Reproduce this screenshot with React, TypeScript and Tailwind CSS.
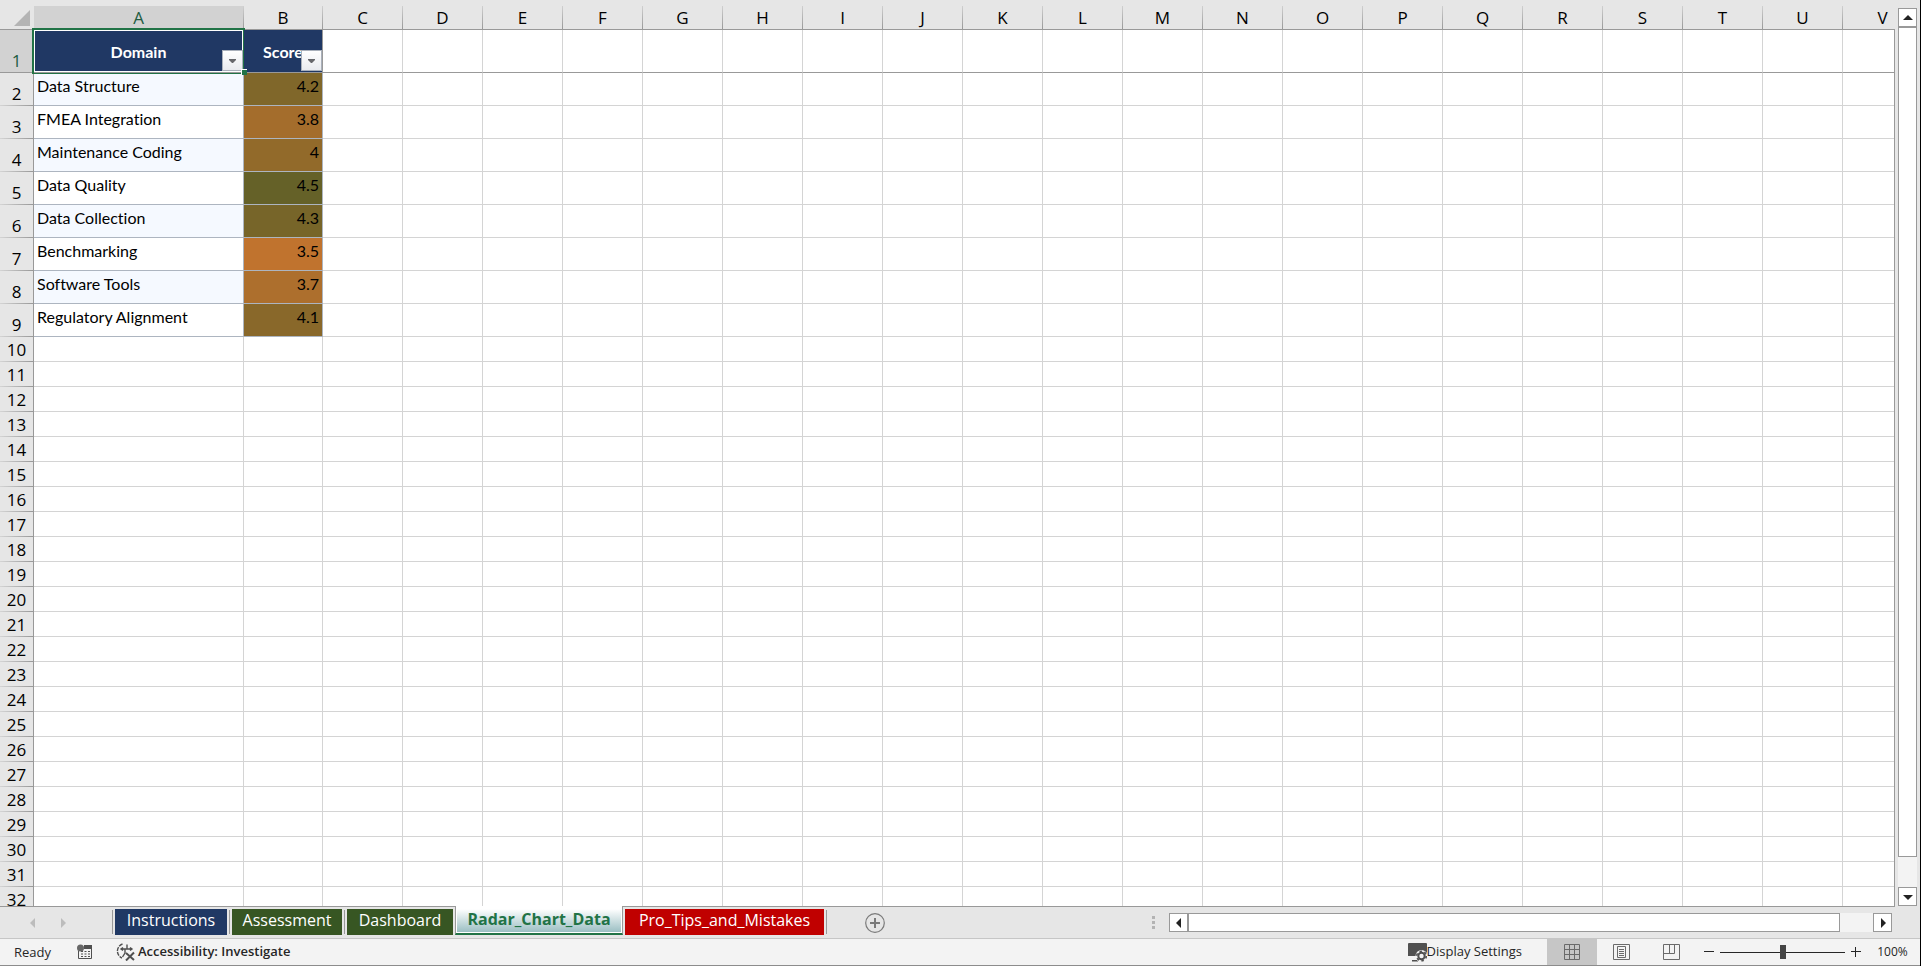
import { type ReactNode } from 'react';

const columns = 'ABCDEFGHIJKLMNOPQRSTUV'.split('');

const scores = [
  { domain: 'Data Structure', score: 4.2, color: 'bg-[#80672a]' },
  { domain: 'FMEA Integration', score: 3.8, color: 'bg-[#a46d2c]' },
  { domain: 'Maintenance Coding', score: 4, color: 'bg-[#926a2a]' },
  { domain: 'Data Quality', score: 4.5, color: 'bg-[#656128]' },
  { domain: 'Data Collection', score: 4.3, color: 'bg-[#776529]' },
  { domain: 'Benchmarking', score: 3.5, color: 'bg-[#c0732e]' },
  { domain: 'Software Tools', score: 3.7, color: 'bg-[#ad6f2d]' },
  { domain: 'Regulatory Alignment', score: 4.1, color: 'bg-[#89682a]' },
];

const emptyRows = Array.from({ length: 23 }, (_, i) => i + 10);

function FilterButton({ label }: { label: string }) {
  return (
    <button
      type="button"
      aria-label={label}
      className="absolute right-0 bottom-px flex h-[21px] w-[21px] items-center justify-center border border-[#a9b0bb] bg-linear-to-b from-white to-[#e9ebef]"
    >
      <svg width="7" height="4" viewBox="0 0 7 4" fill="#66676b">
        <path d="M0 0h7v1L4 4H3L0 1z" />
      </svg>
    </button>
  );
}

function RowHeader({ row }: { row: number }) {
  return (
    <th
      scope="row"
      className="border-r border-[#999] bg-[#e6e6e6] p-0 text-center align-bottom text-[17px] leading-5 font-normal"
    >
      <div className="pt-[3px] pb-px">{row}</div>
      <div className="h-px bg-linear-to-r from-[#d4d4d4] to-[#999]" />
    </th>
  );
}

function BlankCells({ count, className }: { count: number; className: string }) {
  return Array.from({ length: count }, (_, i) => (
    <td key={i} className={`border-r border-b p-0 ${className}`} />
  ));
}

function Grid() {
  return (
    <table className="w-0 table-fixed border-separate border-spacing-0 bg-white font-['Open_Sans',sans-serif] text-black [font-variant-ligatures:none]">
      <colgroup>
        <col className="w-[34px]" />
        <col className="w-[210px]" />
        <col className="w-[79px]" />
        {columns.slice(2).map((c) => (
          <col key={c} className="w-20" />
        ))}
      </colgroup>
      <thead>
        <tr className="h-[30px] bg-[#e6e6e6]">
          <td className="border-b border-[#999] p-0">
            <button type="button" aria-label="Select all" className="mt-1.5 ml-3.5 block h-4 w-4">
              <svg width="16" height="16" viewBox="0 0 16 16" fill="#b4b4b4">
                <path d="M16 0v16H0z" />
              </svg>
            </button>
          </td>
          {columns.map((c) => (
            <th
              key={c}
              scope="col"
              className="border-b border-[#999] p-0 align-bottom text-[17px] font-normal"
            >
              <div
                className={
                  c === 'A'
                    ? 'flex h-[23px] bg-[#d2d2d2] text-[#215c41]'
                    : 'flex h-[23px]'
                }
              >
                <span className="flex-1 text-center leading-6">{c}</span>
                <span className="w-px bg-linear-to-b from-[#d0d0d0] to-[#999]" />
              </div>
            </th>
          ))}
        </tr>
      </thead>
      <tbody>
        <tr className="h-[43px]">
          <th
            scope="row"
            className="border-r border-b border-[#999] bg-[#d2d2d2] p-0 pb-px text-center align-bottom text-[17px] leading-5 font-normal text-[#215c41]"
          >
            1
          </th>
          <td className="relative border-r border-b border-[#999] bg-[#203864] p-0 pt-0.5 text-center font-[Lato,sans-serif] text-base font-bold text-white">
            Domain
            <span className="absolute inset-0 border border-white" />
            <FilterButton label="Filter Domain" />
            <span className="absolute -inset-0.5 border-2 border-b border-[#217346]" />
            <span className="absolute -right-1 -bottom-[3px] z-10 h-[6px] w-[6px] border-t border-l border-white bg-[#217346]" />
          </td>
          <td className="relative border-r border-b border-[#999] bg-[#203864] p-0 pt-0.5 text-center font-[Lato,sans-serif] text-base font-bold text-white">
            Score
            <FilterButton label="Filter Score" />
          </td>
          <BlankCells count={20} className="border-r-[#d4d4d4] border-b-[#999]" />
        </tr>
        {scores.map((s, i) => (
          <tr key={s.domain} className="h-[33px]">
            <RowHeader row={i + 2} />
            <td
              className={`border-r border-b border-[#adb5c0] p-0 pt-px pl-[3px] align-top font-[Lato,sans-serif] text-base ${
                i % 2 === 0 ? 'bg-[#f5f9ff]' : 'bg-white'
              }`}
            >
              {s.domain}
            </td>
            <td
              className={`border-r border-b border-[#adb5c0] p-0 pt-px pr-[3px] text-right align-top font-[Lato,sans-serif] text-base ${s.color}`}
            >
              {s.score}
            </td>
            <BlankCells count={20} className="border-[#d4d4d4]" />
          </tr>
        ))}
        {emptyRows.map((row) => (
          <tr key={row} className="h-[25px]">
            <RowHeader row={row} />
            <BlankCells count={22} className="border-[#d4d4d4]" />
          </tr>
        ))}
      </tbody>
    </table>
  );
}

function ScrollButton({ label, path }: { label: string; path: string }) {
  return (
    <button
      type="button"
      aria-label={label}
      className="flex h-[19px] w-[19px] shrink-0 items-center justify-center border border-[#999] bg-white"
    >
      <svg width="10" height="10" viewBox="0 0 10 10" fill="#222">
        <path d={path} />
      </svg>
    </button>
  );
}

function SheetTab({ name, color }: { name: string; color: string }) {
  return (
    <button type="button" className={`mt-0.5 h-[26px] pb-1 leading-[22px] text-white ${color}`}>
      {name}
    </button>
  );
}

function Separator() {
  return <span className="mx-0.5 mt-[3px] h-6 w-px bg-[#999]" />;
}

function SheetBar() {
  return (
    <div className="flex h-8 shrink-0 border-b border-[#c6c6c6] bg-[#e6e6e6] font-['Open_Sans',sans-serif] text-base">
      <div className="flex flex-1 items-start">
        <div className="flex h-8 w-[110px] items-center gap-[26px] pl-[30px]">
          <button type="button" aria-label="Previous sheet">
            <svg width="5" height="10" viewBox="0 0 5 10" fill="#bcbcbc">
              <path d="M5 0v10L0 5z" />
            </svg>
          </button>
          <button type="button" aria-label="Next sheet">
            <svg width="5" height="10" viewBox="0 0 5 10" fill="#bcbcbc">
              <path d="M0 0v10l5-5z" />
            </svg>
          </button>
        </div>
        <Separator />
        <SheetTab name="Instructions" color="w-[112px] bg-[#203864]" />
        <Separator />
        <SheetTab name="Assessment" color="w-[110px] bg-[#375623]" />
        <Separator />
        <SheetTab name="Dashboard" color="w-[106px] bg-[#375623]" />
        <button
          type="button"
          className="-mt-px ml-0.5 h-[29px] w-[168px] border-x border-b-2 border-x-[#999] border-b-[#217346] bg-white p-px pt-[3px] font-bold text-[#217346]"
        >
          <span className="block h-[23px] bg-linear-to-b from-white to-[#9bbfc3] leading-5">
            Radar_Chart_Data
          </span>
        </button>
        <span className="w-0.5" />
        <SheetTab name="Pro_Tips_and_Mistakes" color="w-[199px] bg-[#c00000]" />
        <Separator />
        <button type="button" aria-label="New sheet" className="mt-1.5 ml-9">
          <svg width="20" height="20" viewBox="0 0 20 20" fill="none" stroke="#7a7a7a">
            <circle cx="10" cy="10" r="9.3" strokeWidth="1.2" />
            <path d="M5 10h10M10 5v10" strokeWidth="2" />
          </svg>
        </button>
      </div>
      <div className="flex w-2/5 items-start pt-1.5 pr-7">
        <div className="mt-[3px] mr-3.5 flex w-[3px] flex-col gap-0.5">
          <span className="h-[3px] bg-[#b3b3b3]" />
          <span className="h-[3px] bg-[#b3b3b3]" />
          <span className="h-[3px] bg-[#b3b3b3]" />
        </div>
        <ScrollButton label="Scroll left" path="M7 0v10L2 5z" />
        <span className="h-[19px] flex-1 border border-[#999] bg-white" />
        <span className="h-[19px] w-[33px] bg-[#f3f3f3]" />
        <ScrollButton label="Scroll right" path="M3 0v10l5-5z" />
      </div>
    </div>
  );
}

function ViewButton({ label, active, children }: { label: string; active?: boolean; children: ReactNode }) {
  return (
    <button
      type="button"
      aria-label={label}
      className={`flex w-[50px] items-center justify-center ${active ? 'bg-[#c6c6c6]' : ''}`}
    >
      <svg width="18" height="16" viewBox="0 0 18 16" fill="none" stroke="#6a6a6a">
        {children}
      </svg>
    </button>
  );
}

function StatusBar() {
  return (
    <div className="flex h-[27px] shrink-0 items-stretch border-b border-[#8c8c8c] bg-[#f3f3f3] font-['Open_Sans',sans-serif] text-[13px] text-[#262626]">
      <span className="w-[77px] pl-3.5 leading-[26px]">Ready</span>
      <button type="button" aria-label="Record macro" className="mr-6">
        <svg width="15" height="16" viewBox="0 0 15 16" fill="none">
          <path d="M7 1h8v4H7z" fill="#505050" />
          <path d="M1.5 7v7.500h13V5" stroke="#505050" />
          <path
            d="M4 7.500h2M7.500 7.500h2M11 7.500h2M4 10h2M7.500 10h2M11 10h2M4 12.500h2M7.500 12.500h2M11 12.500h2"
            stroke="#505050"
          />
          <circle cx="3.5" cy="4" r="3.5" fill="#666" />
        </svg>
      </button>
      <button type="button" className="flex items-center gap-[3px] font-semibold">
        <svg width="19" height="18" viewBox="0 0 19 18" fill="none" stroke="#505050" strokeWidth="1.4">
          <path d="M6.500 1A7.500 7.500 0 0 0 6 15" strokeDasharray="4 1" />
          <path d="M11 1.500v4M5 6h11M7 4.500L5 6l2 1.500M14 4.500L16 6l-2 1.500" />
          <path d="M9 6v4l-2.500 4" />
          <path d="M10 10l8 7M18 9.500L10 17.500" strokeWidth="2" />
        </svg>
        Accessibility: Investigate
      </button>
      <button type="button" className="mr-[25px] ml-auto flex items-center">
        <svg width="19" height="19" viewBox="0 0 19 19">
          <path d="M1 0h17q1 0 1 1v12H0V1q0-1 1-1z" fill="#505050" />
          <path d="M4 17h6v1.500H4z" fill="#505050" />
          <circle cx="13.5" cy="13" r="6" fill="#f3f3f3" />
          <circle cx="13.5" cy="13" r="3.2" fill="none" stroke="#505050" strokeWidth="2" />
          <circle
            cx="13.5"
            cy="13"
            r="4.8"
            fill="none"
            stroke="#505050"
            strokeWidth="1.6"
            strokeDasharray="2.5 2.5"
          />
        </svg>
        Display Settings
      </button>
      <ViewButton label="Normal view" active>
        <path d="M1.500.5h15v15h-15zM1.500 5.500h15M1.500 10.500h15M6.500.5v15M11.500.5v15" />
      </ViewButton>
      <ViewButton label="Page layout">
        <path d="M.5.5h16v15H.5zM4.500 2.500h8v11h-8zM6 5.500h5M6 7.500h5M6 9.500h5M6 11.500h5" />
      </ViewButton>
      <ViewButton label="Page break preview">
        <path d="M.5.5h16v15H.5zM.5 9.500h11v-9M6.500.5v9" />
      </ViewButton>
      <div className="flex items-center gap-1.5 pl-[7px]">
        <button type="button" aria-label="Zoom out">
          <svg width="10" height="11" viewBox="0 0 10 11" stroke="#262626">
            <path d="M0 4.500h10" />
          </svg>
        </button>
        <input
          type="range"
          aria-label="Zoom"
          min={10}
          max={190}
          defaultValue={100}
          className="h-4 w-[125px] appearance-none bg-transparent [&::-webkit-slider-runnable-track]:h-px [&::-webkit-slider-runnable-track]:bg-[#262626] [&::-webkit-slider-thumb]:-mt-[7px] [&::-webkit-slider-thumb]:h-3.5 [&::-webkit-slider-thumb]:w-1.5 [&::-webkit-slider-thumb]:appearance-none [&::-webkit-slider-thumb]:bg-[#444]"
        />
        <button type="button" aria-label="Zoom in">
          <svg width="10" height="11" viewBox="0 0 10 11" stroke="#262626">
            <path d="M0 4.500h10M4.500 0v10" />
          </svg>
        </button>
      </div>
      <button type="button" className="w-[59px] pl-1 text-xs">
        100%
      </button>
    </div>
  );
}

export default function App() {
  return (
    <div className="flex h-screen flex-col overflow-hidden border-r border-black bg-[#e6e6e6]">
      <div className="flex min-h-0 flex-1">
        <div className="min-w-0 flex-1 overflow-hidden border-b border-[#999]">
          <Grid />
        </div>
        <div className="mt-[29px] w-px bg-[#999]" />
        <div className="flex w-[25px] flex-col items-start pt-2 pb-px pl-[3px]">
          <ScrollButton label="Scroll up" path="M0 7h10L5 2z" />
          <span className="w-[19px] flex-1 border border-[#999] bg-white" />
          <span className="h-[30px] w-[19px] bg-[#f3f3f3]" />
          <ScrollButton label="Scroll down" path="M0 3h10L5 8z" />
        </div>
      </div>
      <SheetBar />
      <StatusBar />
    </div>
  );
}
